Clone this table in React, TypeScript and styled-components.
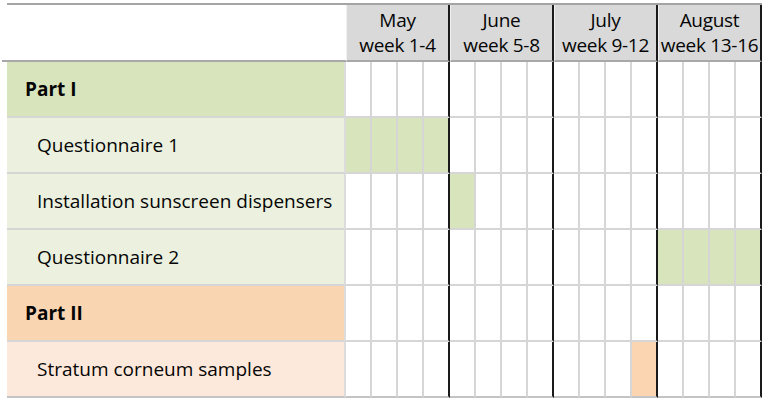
import React from 'react';
import styled, {createGlobalStyle} from 'styled-components';

type Tone = 'green' | 'orange';

type Row = {
    label: string;
    part?: boolean;
    tone: Tone;
    weeks: number[];
};

const months = [
    {name: 'May', weeks: 'week 1-4'},
    {name: 'June', weeks: 'week 5-8'},
    {name: 'July', weeks: 'week 9-12'},
    {name: 'August', weeks: 'week 13-16'}
];

const rows: Row[] = [
    {label: 'Part I', part: true, tone: 'green', weeks: []},
    {label: 'Questionnaire 1', tone: 'green', weeks: [1, 2, 3, 4]},
    {label: 'Installation sunscreen dispensers', tone: 'green', weeks: [5]},
    {label: 'Questionnaire 2', tone: 'green', weeks: [13, 14, 15, 16]},
    {label: 'Part II', part: true, tone: 'orange', weeks: []},
    {label: 'Stratum corneum samples', tone: 'orange', weeks: [12]}
];

const WEEKS = Array.from({length: 16}, (_, i) => i + 1);

// 색상
const labelBg = (tone: Tone, part?: boolean) => {
    if (tone === 'green') return part ? '#d8e4bc' : '#ebf1de';
    return part ? '#fad5b2' : '#fde9db';
};
const barBg = (tone: Tone) => (tone === 'green' ? '#d8e4bc' : '#fbd5b1');

export default function App() {
    return (
        <>
            <GlobalStyle/>
            <Page>
                <Chart>
                    <Corner/>
                    {months.map(m => (
                        <MonthHead key={m.name}>
                            <span>{m.name}</span>
                            <span>{m.weeks}</span>
                        </MonthHead>
                    ))}

                    {rows.map((row, ri) => (
                        <React.Fragment key={row.label}>
                            <Label $tone={row.tone} $part={row.part} $last={ri === rows.length - 1}>
                                {row.label}
                            </Label>
                            {WEEKS.map(w => (
                                <WeekCell
                                    key={w}
                                    $monthEnd={w % 4 === 0}
                                    $last={ri === rows.length - 1}
                                    $fill={row.weeks.includes(w) ? barBg(row.tone) : undefined}/>
                            ))}
                        </React.Fragment>
                    ))}
                </Chart>
            </Page>
        </>
    );
}

// --------------------------------------
// styles
// --------------------------------------

const GlobalStyle = createGlobalStyle`
  body {
    margin: 0;
    background: #fff;
    font-family: "Open Sans", "Noto Sans", sans-serif;
    color: #050505;
  }
`;

const Page = styled.div`
  width: 765px;
  height: 403px;
  padding: 3px 0 0 7px;
  box-sizing: border-box;
`;

const Chart = styled.div`
  display: grid;
  grid-template-columns: 339px repeat(16, 26px);
  grid-template-rows: 57px repeat(6, 56px);
  border-top: 2px solid #a4a4a4;
  width: 755px;
`;

const Corner = styled.div`
  background: #fff;
  border-bottom: 2px solid #a8a8a8;
  margin-left: -5px;
`;

const MonthHead = styled.div`
  grid-column: span 4;
  display: flex;
  flex-direction: column;
  align-items: center;
  justify-content: center;
  background: #d9d9d9;
  border-left: 1px solid #f0f0f0;
  border-right: 2px solid #1a1a1a;
  border-bottom: 2px solid #a8a8a8;
  box-sizing: border-box;
  font-size: 19px;
  line-height: 25px;
  white-space: nowrap;
  letter-spacing: -0.3px;
`;

const Label = styled.div<{$tone: Tone; $part?: boolean; $last?: boolean}>`
  display: flex;
  align-items: center;
  padding-left: ${({$part}) => ($part ? '18px' : '30px')};
  background: ${({$tone, $part}) => labelBg($tone, $part)};
  border-bottom: 2px solid ${({$last}) => ($last ? '#c4c4c4' : '#d6d6d6')};
  border-right: 2px solid #dcdcdc;
  box-sizing: border-box;
  font-size: 19px;
  font-weight: ${({$part}) => ($part ? 700 : 400)};
  white-space: nowrap;
`;

const WeekCell = styled.div<{$monthEnd: boolean; $last: boolean; $fill?: string}>`
  background: ${({$fill}) => $fill || '#fff'};
  border-right: 2px solid ${({$monthEnd}) => ($monthEnd ? '#1a1a1a' : '#d6d6d6')};
  border-bottom: 2px solid ${({$last}) => ($last ? '#c4c4c4' : '#d6d6d6')};
  box-sizing: border-box;
`;
